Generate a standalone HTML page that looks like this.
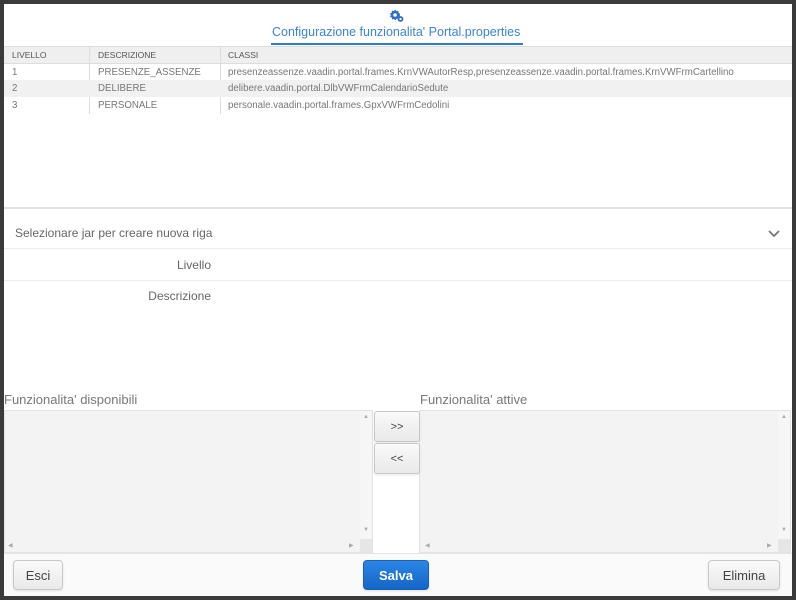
<!DOCTYPE html>
<html><head><meta charset="utf-8"><style>
*{box-sizing:border-box;margin:0;padding:0}
body{width:796px;height:600px;background:#3a3a3a;font-family:"Liberation Sans",sans-serif;position:relative;overflow:hidden;color:#555}
.win{position:absolute;left:4px;top:4px;width:788px;height:592px;background:#fff}
.abs{position:absolute}
.t{font-size:9.7px;color:#777;white-space:nowrap}
.btn{position:absolute;border:1px solid #c8c8c8;border-radius:4px;background:linear-gradient(#fafafa,#e9e9e9);font-size:13px;color:#444;display:flex;align-items:center;justify-content:center;box-shadow:0 1px 2px rgba(0,0,0,.1)}
.list{position:absolute;background:#f3f3f3;border:1px solid #e2e2e2}
.arr{position:absolute;font-size:6px;color:#aaa}
</style></head><body>
<div class="win">
  <svg class="abs" style="left:386px;top:6px" width="14" height="13" viewBox="0 0 14 13"><circle cx="5" cy="5" r="3" fill="none" stroke="#2f6fc8" stroke-width="2.4"/><circle cx="5" cy="5" r="4.3" fill="none" stroke="#2f6fc8" stroke-width="1.4" stroke-dasharray="1.5 1.3"/><circle cx="10.5" cy="9" r="2" fill="none" stroke="#2f6fc8" stroke-width="1.8"/></svg>
  <div class="abs" style="left:268px;top:21px;font-size:12.5px;color:#3a84d4">Configurazione funzionalita' Portal.properties</div>
  <div class="abs" style="left:267px;top:39px;width:252px;height:2px;background:#2f7bd0"></div>

  <div class="abs" style="left:0;top:42px;width:788px;height:18px;background:#efefef;border-top:1px solid #ddd;border-bottom:1px solid #ddd"></div>
  <div class="abs" style="left:85px;top:42px;width:1px;height:68px;background:#ddd"></div>
  <div class="abs" style="left:216px;top:42px;width:1px;height:68px;background:#ddd"></div>
  <div class="abs t" style="left:8px;top:46px;font-size:8.5px;color:#555">LIVELLO</div>
  <div class="abs t" style="left:94px;top:46px;font-size:8.5px;color:#555">DESCRIZIONE</div>
  <div class="abs t" style="left:224px;top:46px;font-size:8.5px;color:#555">CLASSI</div>
  <div class="abs" style="left:0;top:76px;width:788px;height:17px;background:#f1f1f1"></div>
  <div class="abs t" style="left:8px;top:63px">1</div><div class="abs t" style="left:94px;top:63px">PRESENZE_ASSENZE</div><div class="abs t" style="left:224px;top:63px">presenzeassenze.vaadin.portal.frames.KrnVWAutorResp,presenzeassenze.vaadin.portal.frames.KrnVWFrmCartellino</div>
  <div class="abs t" style="left:8px;top:79px">2</div><div class="abs t" style="left:94px;top:79px">DELIBERE</div><div class="abs t" style="left:224px;top:79px">delibere.vaadin.portal.DlbVWFrmCalendarioSedute</div>
  <div class="abs t" style="left:8px;top:96px">3</div><div class="abs t" style="left:94px;top:96px">PERSONALE</div><div class="abs t" style="left:224px;top:96px">personale.vaadin.portal.frames.GpxVWFrmCedolini</div>
  <div class="abs" style="left:0;top:203px;width:788px;height:2px;background:#e2e2e2"></div>

  <div class="abs" style="left:11px;top:222px;font-size:12px;color:#666">Selezionare jar per creare nuova riga</div>
  <svg class="abs" style="left:764px;top:226px" width="12" height="8"><path d="M1 1 L6 6 L11 1" fill="none" stroke="#777" stroke-width="1.8"/></svg>
  <div class="abs" style="left:0;top:244px;width:788px;height:1px;background:#ececec"></div>
  <div class="abs" style="left:0;top:254px;width:207px;text-align:right;font-size:12px;color:#666">Livello</div>
  <div class="abs" style="left:0;top:276px;width:788px;height:1px;background:#ececec"></div>
  <div class="abs" style="left:0;top:285px;width:207px;text-align:right;font-size:12px;color:#666">Descrizione</div>

  <div class="abs" style="left:0;top:388px;font-size:13px;color:#777">Funzionalita' disponibili</div>
  <div class="abs" style="left:416px;top:388px;font-size:13px;color:#777">Funzionalita' attive</div>
  <div class="list" style="left:0;top:406px;width:369px;height:143px"></div>
  <div class="abs" style="left:356px;top:407px;width:12px;height:128px;background:#f6f6f6"></div>
  <div class="abs" style="left:356px;top:535px;width:12px;height:13px;background:#e6e6e6"></div>
  <div class="arr" style="left:359px;top:410px">▲</div><div class="arr" style="left:359px;top:523px">▼</div>
  <div class="arr" style="left:4px;top:538px">◀</div><div class="arr" style="left:345px;top:538px">▶</div>
  <div class="list" style="left:415px;top:406px;width:372px;height:143px"></div>
  <div class="abs" style="left:774px;top:407px;width:12px;height:128px;background:#f6f6f6"></div>
  <div class="abs" style="left:774px;top:535px;width:12px;height:13px;background:#e6e6e6"></div>
  <div class="arr" style="left:777px;top:410px">▲</div><div class="arr" style="left:777px;top:523px">▼</div>
  <div class="arr" style="left:421px;top:538px">◀</div><div class="arr" style="left:763px;top:538px">▶</div>
  <div class="btn" style="left:370px;top:407px;width:46px;height:31px;font-size:11px;border-radius:3px">&gt;&gt;</div>
  <div class="btn" style="left:370px;top:439px;width:46px;height:31px;font-size:11px;border-radius:3px">&lt;&lt;</div>

  <div class="abs" style="left:0;top:549px;width:788px;height:43px;background:#fafafa;border-top:1px solid #e6e6e6"></div>
  <div class="btn" style="left:9px;top:556px;width:50px;height:30px">Esci</div>
  <div class="btn" style="left:359px;top:556px;width:66px;height:30px;background:linear-gradient(#2a86e6,#1565c8);border-color:#1a5fb8;color:#fff;font-weight:bold">Salva</div>
  <div class="btn" style="left:704px;top:556px;width:72px;height:30px">Elimina</div>
</div>
</body></html>
